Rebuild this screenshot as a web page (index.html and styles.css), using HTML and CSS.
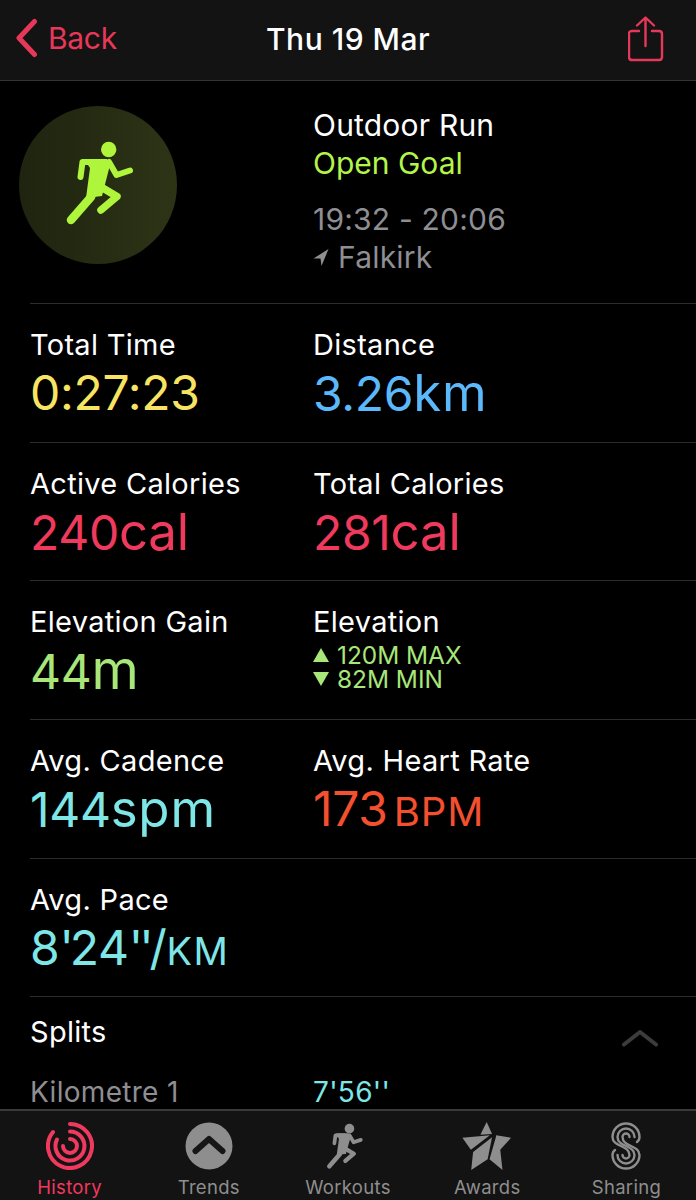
FILE: index.html
```html
<!DOCTYPE html>
<html lang="en">
<head>
<meta charset="utf-8">
<title>Thu 19 Mar</title>
<link rel="stylesheet" href="styles.css">
</head>
<body>
<div class="app">
  <header class="nav">
    <div class="nav-back">
      <svg class="back-icon" width="26" height="40" viewBox="0 0 26 40"><path d="M22.500 3.500 L7 20 L22.500 36.500" fill="none" stroke="#e8385a" stroke-width="5" stroke-linecap="round" stroke-linejoin="round"/></svg>
      <span>Back</span>
    </div>
    <div class="nav-title">Thu 19 Mar</div>
    <svg class="share-icon" width="36" height="46" viewBox="0 0 36 46"><path d="M11 15 H4 Q1 15 1 18 V41 Q1 44 4 44 H31 Q34 44 34 41 V18 Q34 15 31 15 H24 M17.500 30 V2 M9 9.500 L17.500 1.500 L26 9.500" fill="none" stroke="#e8385a" stroke-width="2.400" stroke-linecap="round" stroke-linejoin="round"/></svg>
  </header>

  <main class="content">
    <section class="summary">
      <div class="badge">
        <svg width="158" height="158" viewBox="19 106 158 158">
          <defs>
            <linearGradient id="badgeFill" x1="0" y1="0" x2="1" y2="0">
              <stop offset="0" stop-color="#1e240f"/>
              <stop offset="1" stop-color="#2d3416"/>
            </linearGradient>
          </defs>
          <circle cx="98" cy="185" r="79" fill="url(#badgeFill)"/>
          <circle cx="108.700" cy="149.500" r="7.700" fill="#aef53c"/>
          <path d="M84 159 H107 L110 165 L102 196 L86 198 L90 168 Z" fill="#aef53c"/>
          <g fill="none" stroke="#aef53c" stroke-linecap="round" stroke-linejoin="round">
            <path d="M80.500 177 L82.500 162 H100" stroke-width="6"/>
            <path d="M109 162 L116.500 175 L130 170.500" stroke-width="6"/>
            <path d="M93 190 L91 197 L71 220" stroke-width="8.500"/>
            <path d="M96 184 L117 196.500 L101 210" stroke-width="7.500"/>
          </g>
        </svg>
      </div>
      <div class="info">
        <div class="info-title">Outdoor Run</div>
        <div class="info-goal">Open Goal</div>
        <div class="info-time">19:32 - 20:06</div>
        <div class="info-place">
          <svg width="16" height="17" viewBox="0 0 16 17"><path d="M15.500 0 L0.500 9.500 L7.500 9.500 L8.500 17 Z" fill="#8e8e93"/></svg>
          <span>Falkirk</span>
        </div>
      </div>
    </section>

    <section class="row">
      <div class="cell"><div class="label">Total Time</div><div class="value yellow">0:27:23</div></div>
      <div class="cell"><div class="label">Distance</div><div class="value blue">3.26<span class="suffix">km</span></div></div>
    </section>
    <section class="row">
      <div class="cell"><div class="label">Active Calories</div><div class="value red">240<span class="suffix suffix-tight">cal</span></div></div>
      <div class="cell"><div class="label">Total Calories</div><div class="value red">281<span class="suffix suffix-tight">cal</span></div></div>
    </section>
    <section class="row">
      <div class="cell"><div class="label">Elevation Gain</div><div class="value green">44<span class="suffix suffix-wide">m</span></div></div>
      <div class="cell">
        <div class="label">Elevation</div>
        <div class="elev">
          <div class="elev-line"><svg width="16" height="14" viewBox="0 0 16 14"><path d="M8 0 L16 14 H0 Z" fill="#a8e67a"/></svg>120M MAX</div>
          <div class="elev-line"><svg width="16" height="14" viewBox="0 0 16 14"><path d="M0 0 H16 L8 14 Z" fill="#a8e67a"/></svg>82M MIN</div>
        </div>
      </div>
    </section>
    <section class="row">
      <div class="cell"><div class="label">Avg. Cadence</div><div class="value teal">144<span class="suffix">spm</span></div></div>
      <div class="cell"><div class="label">Avg. Heart Rate</div><div class="value orange">173<span class="unit-bpm">BPM</span></div></div>
    </section>
    <section class="row">
      <div class="cell"><div class="label">Avg. Pace</div><div class="value teal">8<span class="quote">'</span>24<span class="quote">''</span>/<span class="unit-km">KM</span></div></div>
    </section>

    <section class="splits">
      <div class="splits-head">
        <div class="label">Splits</div>
        <svg class="collapse" width="38" height="18" viewBox="0 0 38 18"><path d="M3 15.500 L19 3 L35 15.500" fill="none" stroke="#3c3c3e" stroke-width="4" stroke-linecap="round" stroke-linejoin="round"/></svg>
      </div>
      <div class="split-row">
        <div class="split-name">Kilometre 1</div>
        <div class="split-val">7'56''</div>
      </div>
    </section>
  </main>

  <nav class="tabs">
    <div class="tab active">
      <svg width="48" height="48" viewBox="0 0 48 48" fill="none" stroke="#f0395f" stroke-width="4" stroke-linecap="round">
        <path d="M24 2 A22 22 0 1 1 7 10"/>
        <path d="M24 9.500 A14.500 14.500 0 1 1 11 17.500"/>
        <path d="M24 17 A7 7 0 1 1 17 24"/>
      </svg>
      <span>History</span>
    </div>
    <div class="tab">
      <svg width="48" height="48" viewBox="0 0 48 48"><circle cx="24" cy="24" r="23.500" fill="#8e8e8e"/><path d="M10.500 29 L24 17 L37.500 29" fill="none" stroke="#161616" stroke-width="6" stroke-linecap="round" stroke-linejoin="round"/></svg>
      <span>Trends</span>
    </div>
    <div class="tab">
      <svg width="48" height="48" viewBox="61 137 90 90">
        <circle cx="108.700" cy="149.500" r="9" fill="#8e8e8e"/>
        <path d="M84 158 H107 L111 165 L102 197 L85 198 L89 169 Z" fill="#8e8e8e"/>
        <g fill="none" stroke="#8e8e8e" stroke-linecap="round" stroke-linejoin="round">
          <path d="M80.500 177 L82.500 162 H100" stroke-width="7"/>
          <path d="M109 162 L116.500 175 L130 170.500" stroke-width="7"/>
          <path d="M93 190 L91 197 L71 220" stroke-width="8.500"/>
          <path d="M96 184 L117 196.500 L101 210" stroke-width="8"/>
        </g>
      </svg>
      <span>Workouts</span>
    </div>
    <div class="tab">
      <svg width="52" height="50" viewBox="18 20 156 152" fill="#8e8e8e">
        <path d="M95 20 L75 60 L112 58 Z"/>
        <path d="M18 70 L105 62 L45 108 Z"/>
        <path d="M112 68 L52 115 L46 172 L98 138 Z"/>
        <path d="M124 68 L104 138 L145 172 L138 108 L172 70 L125 62 Z"/>
      </svg>
      <span>Awards</span>
    </div>
    <div class="tab">
      <svg width="30" height="48" viewBox="0 0 30 48" fill="none" stroke="#8e8e8e" stroke-width="2.400" stroke-linecap="round">
        <path d="M26 20 C27.500 19 28.500 17 28.500 15 A13.500 13.500 0 1 0 1.500 15 C1.500 25 18.500 23 18.500 33 A3.500 3.500 0 1 1 11.500 33"/>
        <path d="M23.500 15 A8.500 8.500 0 1 0 6.500 15 C6.500 25 23.500 23 23.500 33 A8.500 8.500 0 1 1 6.500 33"/>
        <path d="M18.500 15 A3.500 3.500 0 1 0 11.500 15 C11.500 25 28.500 23 28.500 33 A13.500 13.500 0 1 1 1.500 33 C1.500 31 2.500 29 4 28"/>
      </svg>
      <span>Sharing</span>
    </div>
  </nav>
</div>
</body>
</html>
```
FILE: styles.css
```css
* { box-sizing: border-box; }
html, body { margin: 0; padding: 0; background: #000; }
body { font-family: Inter, "Liberation Sans", sans-serif; color: #fff; }
svg { display: block; flex: none; }

.app { display: flex; flex-direction: column; height: 1200px; overflow: hidden; }

.nav {
  flex: none; height: 81px; background: #131313; border-bottom: 1px solid #333;
  display: flex; align-items: center; justify-content: space-between;
  padding: 0 32px 4px 12px; position: relative;
}
.nav-back { display: flex; align-items: center; gap: 10px; color: #e8385a; font-size: 30px; letter-spacing: -0.3px; }
.nav-title { position: absolute; left: 266px; top: 19px; font-size: 30px; font-weight: 500; letter-spacing: 0.5px; line-height: 40px; }
.share-icon { margin-top: 1px; }

.content { flex: 1; min-height: 0; overflow: hidden; padding-left: 30px; }

.summary { height: 223px; display: flex; border-bottom: 1px solid #2c2c2e; padding-top: 25px; }
.badge { width: 294px; margin-left: -11px; flex: none; }
.info { display: flex; flex-direction: column; font-size: 30px; line-height: 38px; letter-spacing: 0.2px; }
.info-goal { color: #b4f54a; letter-spacing: 0; }
.info-time { color: #8e8e93; margin-top: 18px; }
.info-place { color: #8e8e93; display: flex; align-items: center; gap: 9px; }

.row { height: 138.7px; display: grid; grid-template-columns: 283px 1fr; border-bottom: 1px solid #2c2c2e; padding-top: 21px; }
.label { font-size: 29px; line-height: 40px; letter-spacing: 0.3px; }
.value { font-size: 48px; line-height: 56px; letter-spacing: -0.3px; }
.suffix { font-size: 51px; letter-spacing: 0.8px; }
.suffix-tight { letter-spacing: -0.2px; }
.suffix-wide { font-size: 54px; }
.unit-bpm { font-size: 40px; letter-spacing: 1px; margin-left: 6px; }
.unit-km { font-size: 38px; letter-spacing: 1.5px; }
.quote { letter-spacing: -4px; }
.yellow { color: #f7e463; }
.blue { color: #5bb8fa; }
.red { color: #ef3a5d; }
.green { color: #a8e67a; }
.teal { color: #7ee6e6; }
.orange { color: #f4502f; }

.elev { color: #a8e67a; font-size: 24.400px; line-height: 24px; margin-top: 1px; }
.elev-line { display: flex; align-items: center; gap: 8px; }

.splits { padding: 15px 37px 0 0; }
.splits-head { display: flex; align-items: center; justify-content: space-between; }
.collapse { margin-top: 12px; }
.split-row { display: grid; grid-template-columns: 283px 1fr; font-size: 28px; line-height: 40px; margin-top: 20px; letter-spacing: 0.3px; }
.split-name { color: #8e8e93; }
.split-val { color: #7ee6e6; }

.tabs {
  flex: none; height: 91px; background: #131313; border-top: 2px solid #3a3a3a;
  display: grid; grid-template-columns: repeat(5, 1fr); padding-top: 11px;
}
.tab { display: flex; flex-direction: column; align-items: center; color: #8e8e8e; font-size: 18.500px; line-height: 22px; letter-spacing: 0.3px; gap: 6px; position: relative; }
.tab svg { height: 48px; }
.tab.active { color: #f0395f; }
```
